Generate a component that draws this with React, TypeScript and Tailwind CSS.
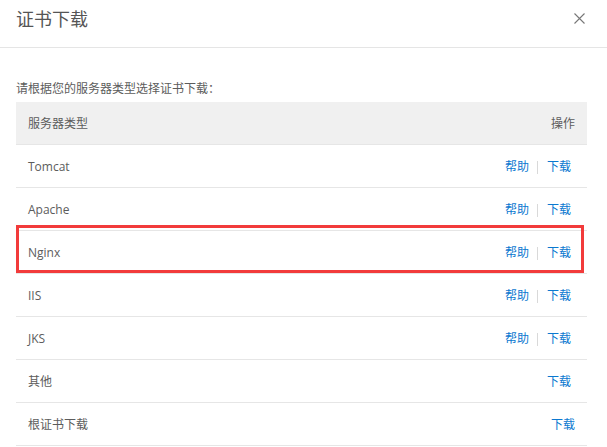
const rows: { name: string; help: boolean; last?: boolean }[] = [
  { name: 'Tomcat', help: true },
  { name: 'Apache', help: true },
  { name: 'Nginx', help: true },
  { name: 'IIS', help: true },
  { name: 'JKS', help: true },
  { name: '其他', help: false },
  { name: '根证书下载', help: false, last: true },
];

export default function App() {
  return (
    <div
      className="relative w-[607px] h-[447px] overflow-hidden bg-white text-[#5c5c5c]"
      style={{ fontFamily: '"Open Sans", "Noto Sans CJK SC", sans-serif' }}
    >
      {/* header */}
      <div className="flex h-[48px] items-center justify-between border-b border-[#e5e5e5] pl-4 pr-[22px]">
        <span className="text-[18px] leading-none text-[#555] -mt-[10px]">证书下载</span>
        <svg width="11" height="11" viewBox="0 0 11 11" className="-mt-[10px]">
          <path d="M0.5 0.5L10.5 10.5M10.5 0.5L0.5 10.5" stroke="#777" strokeWidth="1.1" />
        </svg>
      </div>

      <div className="pl-4 pr-5">
        <p className="mt-[31px] text-[12px] leading-[20px]">请根据您的服务器类型选择证书下载：</p>

        <div className="mt-[3px] text-[12px]">
          <div className="flex h-[43px] items-center justify-between border-b border-[#e6e6e6] bg-[#f0f0f0] px-3 pt-[2px]">
            <span>服务器类型</span>
            <span>操作</span>
          </div>
          {rows.map(r => (
            <div
              key={r.name}
              className={`flex h-[43px] items-center justify-between border-b border-[#e6e6e6] pl-3 pt-[2px] ${r.last ? 'pr-3' : 'pr-4'}`}
            >
              <span>{r.name}</span>
              <span className="flex items-center text-[#0b78d0]">
                {r.help && (
                  <>
                    <span>帮助</span>
                    <span className="ml-2 mr-[9px] h-[13px] w-px bg-[#d9d9d9]" />
                  </>
                )}
                <span>下载</span>
              </span>
            </div>
          ))}
        </div>
      </div>

      {/* highlight annotation */}
      <div className="pointer-events-none absolute left-[16px] top-[225px] h-[48px] w-[568px] border-[3px] border-[#f23b3b]" />
    </div>
  );
}
